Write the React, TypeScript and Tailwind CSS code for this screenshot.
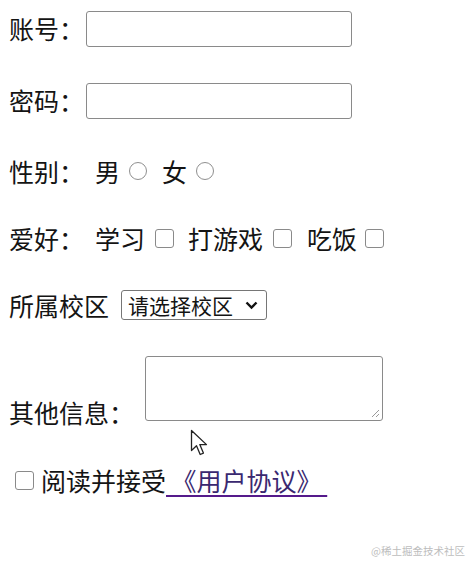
import React from 'react';

const font = { fontFamily: '"Noto Sans CJK SC", "Microsoft YaHei", sans-serif' };

function Radio() {
  return <span className="inline-block shrink-0 w-[18px] h-[18px] rounded-full border-[1.5px] border-[#8f8f8f] bg-white" />;
}

function Check({ className = '' }: { className?: string }) {
  return <span className={`inline-block shrink-0 w-[19px] h-[19px] rounded-[3px] border-[1.5px] border-[#8a8a8a] bg-white ${className}`} />;
}

function Cursor() {
  return (
    <svg className="absolute left-[190px] top-[429px]" width="19" height="28" viewBox="0 0 19 28">
      <path d="M1.5 1.5 L1.5 21.5 L6.5 16.8 L10.2 25.5 L13.4 24.1 L9.8 15.6 L16.5 15.6 Z" fill="white" stroke="#222" strokeWidth="1.3" strokeLinejoin="round" />
    </svg>
  );
}

export default function App() {
  return (
    <div className="relative w-[474px] h-[570px] bg-white text-[#141414] text-[25px] overflow-hidden" style={font}>
      <div className="flex flex-col pl-[9px]">
        {/* 账号 */}
        <div className="flex items-center h-[36px] mt-[11px]">
          <span className="leading-[36px] -mt-[3px]">账号：</span>
          <input className="ml-[2px] w-[266px] h-[36px] rounded-[3px] border-[1.5px] border-[#8a8a8a] bg-white outline-none" />
        </div>

        {/* 密码 */}
        <div className="flex items-center h-[36px] mt-[36px]">
          <span className="leading-[36px] -mt-[2px]">密码：</span>
          <input type="password" className="ml-[2px] w-[266px] h-[36px] rounded-[3px] border-[1.5px] border-[#8a8a8a] bg-white outline-none" />
        </div>

        {/* 性别 */}
        <div className="flex items-center h-[36px] mt-[34px]">
          <span className="leading-[36px]">性别：</span>
          <span className="ml-[11px] leading-[36px]">男</span>
          <span className="ml-[9px] flex"><Radio /></span>
          <span className="ml-[15px] leading-[36px]">女</span>
          <span className="ml-[9px] flex"><Radio /></span>
        </div>

        {/* 爱好 */}
        <div className="flex items-center h-[36px] mt-[31px]">
          <span className="leading-[36px]">爱好：</span>
          <span className="ml-[11px] leading-[36px]">学习</span>
          <Check className="ml-[10px]" />
          <span className="ml-[14px] leading-[36px]">打游戏</span>
          <Check className="ml-[10px]" />
          <span className="ml-[15px] leading-[36px]">吃饭</span>
          <Check className="ml-[8px]" />
        </div>

        {/* 所属校区 */}
        <div className="flex items-center h-[36px] mt-[31px]">
          <span className="leading-[36px]">所属校区</span>
          <div className="ml-[12px] w-[146px] h-[30px] rounded-[3px] border-[1.5px] border-[#767676] bg-white flex items-center pl-[6px] pr-[8px] text-[21px] leading-none">
            <span className="flex-1">请选择校区</span>
            <svg width="13" height="9" viewBox="0 0 13 9">
              <path d="M1.5 1.5 L6.5 6.5 L11.5 1.5" fill="none" stroke="#111" strokeWidth="2.4" />
            </svg>
          </div>
        </div>

        {/* 其他信息 */}
        <div className="flex items-end mt-[33px]">
          <span className="leading-[30px] mb-[-6px]">其他信息：</span>
          <div className="relative ml-[11px] w-[238px] h-[65px] rounded-[3px] border-[1.5px] border-[#8a8a8a] bg-white">
            <svg className="absolute right-[2px] bottom-[2px]" width="10" height="10" viewBox="0 0 10 10">
              <path d="M9 2 L2 9 M9 6 L6 9" stroke="#9a9a9a" strokeWidth="1" />
            </svg>
          </div>
        </div>

        {/* 协议 */}
        <div className="flex items-center h-[36px] mt-[41px] pl-[6px]">
          <Check />
          <span className="ml-[7px] leading-[36px]">阅读并接受</span>
          <a className="leading-[36px] text-[#3a2870] underline decoration-[#551a8b] decoration-[1.5px] underline-offset-[4px] whitespace-pre">
            {' 《用户协议》 '}
          </a>
        </div>
      </div>

      <Cursor />

      <div className="absolute right-[9px] top-[543px] text-[10.5px] text-[#bdbdbd]">@稀土掘金技术社区</div>
    </div>
  );
}
